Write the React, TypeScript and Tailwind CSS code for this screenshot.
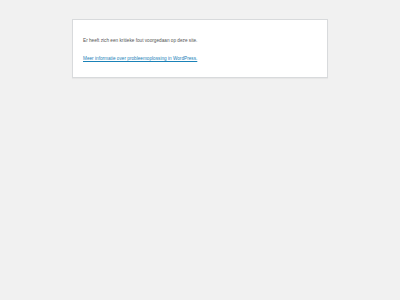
import React from 'react';

const App: React.FC = () => {
  return (
    <div className="min-h-[300px] w-[400px] bg-[#f1f1f1] pt-[19px]" style={{ fontFamily: '"Liberation Sans", Arial, sans-serif' }}>
      <div className="ml-[72px] w-[256px] h-[59px] bg-white border border-[#d8dadc] shadow-[0_1px_1px_rgba(0,0,0,0.04)] pl-[10px] pr-[10px] pt-[17px] text-[4.7px] leading-[7px] text-[#555]">
        <p>Er heeft zich een kritieke fout voorgedaan op deze site.</p>
        <p className="mt-[11px]">
          <a href="#" className="text-[#1a82b8] underline">Meer informatie over probleemoplossing in WordPress.</a>
        </p>
      </div>
    </div>
  );
};

export default App;
